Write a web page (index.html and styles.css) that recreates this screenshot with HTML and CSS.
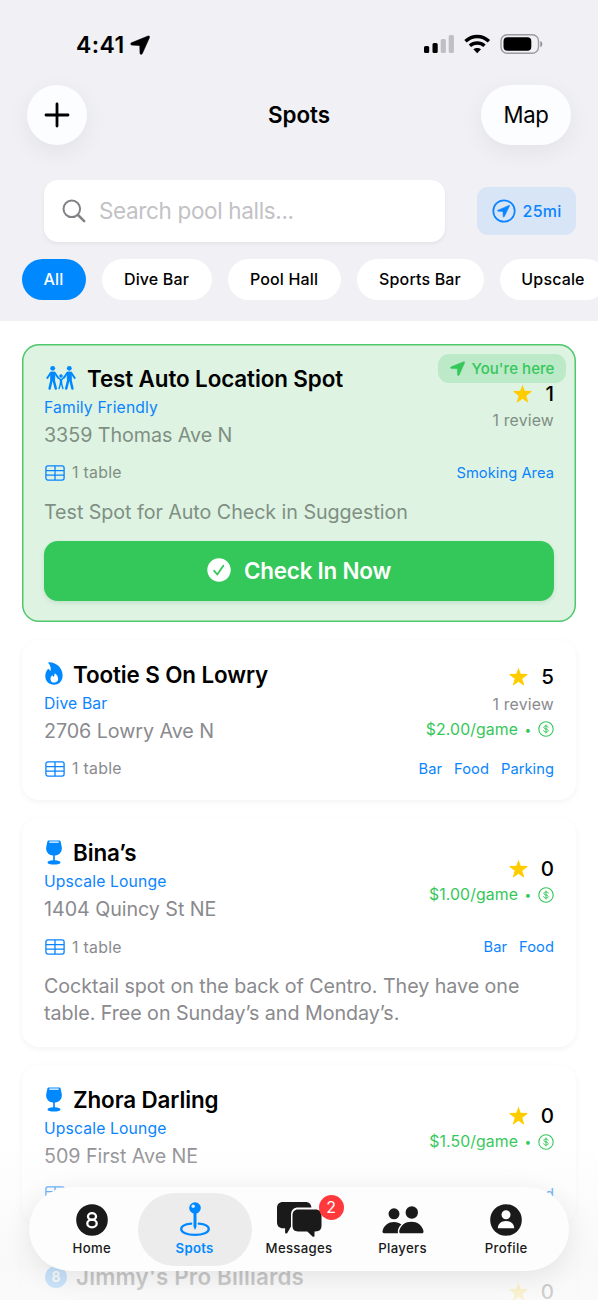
FILE: index.html
```html
<!DOCTYPE html>
<html lang="en">
<head>
<meta charset="utf-8">
<title>Spots</title>
<link rel="stylesheet" href="styles.css">
</head>
<body>
<svg class="defs" aria-hidden="true">
  <symbol id="arrow" viewBox="0 0 20 20"><path d="M18.100 1 1.500 7.800c-1.200.5-.9 2.200.4 2.300l7.300.3c.4 0 .6.200.6.6l.2 7.200c.1 1.400 1.700 1.600 2.300.4L19.500 2.400c.4-.9-.4-1.800-1.400-1.400z" fill="currentColor" stroke="currentColor" stroke-width=".6"/></symbol>
  <symbol id="star" viewBox="0 0 20 20"><path d="M10 .8 12.300 7.200 19 7.400c.5 0 .7.6.3.9L14 12.400l1.900 6.300c.1.500-.4.800-.8.600L10 15.600l-5.100 3.700c-.4.200-.9-.1-.8-.6L6 12.400.7 8.300c-.4-.3-.2-.9.300-.9l6.700-.2z" fill="#ffcc00"/></symbol>
  <symbol id="grid" viewBox="0 0 20 16"><g fill="none" stroke="currentColor" stroke-width="1.300"><rect x=".9" y=".9" width="18.200" height="14.200" rx="2"/><path d="M1 5.600h18M1 10.200h18M10 1v14"/></g></symbol>
  <symbol id="wine" viewBox="0 0 16 24"><path fill="currentColor" fill-rule="evenodd" d="M3 .4h10c.8 0 1.200.4 1.400 1.200l1 4.900c.9 4.600-2.100 8.200-6.600 8.400v4.500c3.200.1 5.400.9 5.400 2.100 0 1.300-2.700 2.100-6.200 2.100s-6.200-.8-6.200-2.100c0-1.200 2.200-2 5.400-2.100v-4.500C2.700 14.700-.3 11.100.6 6.500l1-4.900C1.800.8 2.200.4 3 .4zM4 1.400c-.4 0-.6.200-.7.500-.1.500.2.700.6.700h8.200c.4 0 .7-.2.600-.7-.1-.3-.3-.5-.7-.5z"/></symbol>
  <symbol id="dollar" viewBox="0 0 16 16"><g fill="none" stroke="currentColor" stroke-linecap="round"><circle cx="8" cy="8" r="7.200" stroke-width="1.100"/><path stroke-width="1" d="M10.100 6.200C9.900 5.300 9.100 4.900 8 4.900c-1.200 0-2.100.5-2.100 1.500 0 2.200 4.300.9 4.300 3.200 0 1-.9 1.500-2.200 1.500-1.200 0-2.100-.5-2.300-1.400M8 4v8"/></g></symbol>
</svg>
<div class="screen">
  <header class="top">
    <div class="status">
      <div class="clock"><span class="time">4:41</span><svg class="loc"><use href="#arrow"/></svg></div>
      <svg class="signals" viewBox="0 0 120 20" width="120" height="20">
        <rect x="0" y="12" width="5.200" height="7" rx="1.500"/><rect x="8.500" y="9" width="5.200" height="10" rx="1.500"/>
        <g fill="#bfbfc4"><rect x="16.700" y="5" width="5.200" height="14" rx="1.500"/><rect x="24.700" y="1" width="5.200" height="18" rx="1.500"/></g>
        <g fill="none" stroke="#000" stroke-width="3.500"><path d="M41.500 7.300c6.900-6.300 16.500-6.300 23.400 0"/><path d="M45.900 11.800c4.300-3.800 10.300-3.800 14.600 0"/></g>
        <path d="M53.200 19.200l-3.800-3.900c2.200-1.900 5.400-1.900 7.600 0z"/>
        <rect x="77" y=".7" width="37.500" height="18.600" rx="6.200" fill="none" stroke="#9b9ba0" stroke-width="1.400"/>
        <rect x="79.500" y="3.200" width="27.800" height="13.600" rx="4"/>
        <path d="M116.300 7v6.200c2.600-.9 2.600-5.300 0-6.200z" fill="#8e8e93"/>
      </svg>
    </div>
    <nav class="nav">
      <button class="round" aria-label="Add"><svg width="26" height="26" viewBox="0 0 26 26"><path d="M13 2v22M2 13h22" stroke="#000" stroke-width="2.800" stroke-linecap="round"/></svg></button>
      <h1 class="page-title">Spots</h1>
      <button class="map">Map</button>
    </nav>
    <div class="search-row">
      <div class="search"><svg width="24" height="24" viewBox="0 0 24 24" fill="none" stroke="#818186"><circle cx="9.800" cy="9.800" r="8.300" stroke-width="2"/><path d="m16 16 6.200 6.200" stroke-width="2.500" stroke-linecap="round"/></svg><span class="placeholder">Search pool halls...</span></div>
      <button class="radius"><svg width="24" height="24" viewBox="0 0 24 24"><circle cx="12" cy="12" r="10.700" fill="none" stroke="currentColor" stroke-width="1.700"/><path d="m17 6.400-11 4.800c-.7.300-.5 1 .1 1l4.900.2.200 5c0 .7.800.9 1.100.2l5.200-10.700c.2-.4-.1-.7-.5-.5z" fill="currentColor" stroke="currentColor" stroke-width=".6"/></svg><span>25mi</span></button>
    </div>
    <div class="chips"><span class="chip on">All</span><span class="chip dive">Dive Bar</span><span class="chip hall">Pool Hall</span><span class="chip sports">Sports Bar</span><span class="chip upscale">Upscale</span></div>
  </header>

  <main class="list">
    <article class="card here">
      <span class="badge-here"><svg width="15" height="15"><use href="#arrow"/></svg><span>You're here</span></span>
      <div class="main">
        <div class="info">
          <h2 class="name"><svg class="family" viewBox="0 0 34 26" width="34" height="26"><g fill="currentColor"><circle cx="8.700" cy="3.300" r="2.400"/><circle cx="25.300" cy="3.300" r="2.400"/><circle cx="17" cy="11" r="1.800"/></g><g fill="none" stroke="currentColor" stroke-linecap="round" stroke-linejoin="round"><path stroke-width="5" d="M8.700 9v4.500M25.300 9v4.500"/><path stroke-width="2" d="M7 7.500 3.300 13M10.500 7.500l3.600 5.200M27 7.500l3.700 5.500M23.500 7.500l-3.600 5.200"/><path stroke-width="2.500" d="M7.800 14 5.600 23.500M9.400 14l2.400 9.500M26.200 14l2.200 9.500M24.600 14l-2.400 9.500"/><path stroke-width="1.400" d="m14 12.500 3 2.600 3-2.600M16.500 18.500l-1.400 5M17.500 18.500l1.400 5"/><path stroke-width="2.400" d="M17 15v3.300"/></g></svg><span class="family-name">Test Auto Location Spot</span></h2>
          <div class="kind">Family Friendly</div>
          <div class="addr">3359 Thomas Ave N</div>
        </div>
        <div class="side"><div class="rate"><svg><use href="#star"/></svg><b>1</b></div><div class="review">1 review</div></div>
      </div>
      <div class="meta"><span class="tables"><svg><use href="#grid"/></svg>1 table</span><span class="tags"><span>Smoking Area</span></span></div>
      <p class="desc">Test Spot for Auto Check in Suggestion</p>
      <button class="checkin"><svg width="24" height="24" viewBox="0 0 24 24"><circle cx="12" cy="12" r="11.700" fill="#fff"/><path d="m7.200 12.800 3.100 3.700 6-8.700" fill="none" stroke="#34c759" stroke-width="1.800" stroke-linecap="round" stroke-linejoin="round"/></svg><span>Check In Now</span></button>
    </article>

    <article class="card bar">
      <div class="main">
        <div class="info">
          <h2 class="name"><svg viewBox="0 0 20 24" width="20" height="24"><path fill="currentColor" fill-rule="evenodd" d="M4.500 1.300c-.5-.6-.2-1.100.6-1C13.300.6 18.600 6.200 18.600 13.600c0 5.400-3.300 9.100-8.500 9.100-5.300 0-8.800-3.600-8.800-8.500 0-3.300 1.200-5.600 2.500-7 .5-.5 1.200-.3 1.500.4.300.7.700 1.200 1.200 1.500C7.200 6.400 6.500 3.700 4.500 1.300zM10.200 20.600c2.400 0 3.900-1.400 3.900-3.600 0-2.200-1.200-4.200-3-5.400-.4-.3-.7 0-.6.4.1 1.200-.2 2.100-.8 2.900-.4-.4-.7-.8-.9-1.200-.2-.4-.5-.4-.8-.1-.9.900-1.500 2-1.500 3.300 0 2.300 1.400 3.700 3.700 3.700z"/></svg><span class="tootie">Tootie S On Lowry</span></h2>
          <div class="kind">Dive Bar</div>
          <div class="addr">2706 Lowry Ave N</div>
        </div>
        <div class="side"><div class="rate"><svg><use href="#star"/></svg><b>5</b></div><div class="review">1 review</div><div class="price"><span>$2.00/game</span><i>•</i><svg><use href="#dollar"/></svg></div></div>
      </div>
      <div class="meta"><span class="tables"><svg><use href="#grid"/></svg>1 table</span><span class="tags"><span>Bar</span><span>Food</span><span>Parking</span></span></div>
    </article>

    <article class="card">
      <div class="main">
        <div class="info">
          <h2 class="name"><svg class="glass"><use href="#wine"/></svg><span>Bina’s</span></h2>
          <div class="kind">Upscale Lounge</div>
          <div class="addr">1404 Quincy St NE</div>
        </div>
        <div class="side"><div class="rate"><svg><use href="#star"/></svg><b>0</b></div><div class="price"><span>$1.00/game</span><i>•</i><svg><use href="#dollar"/></svg></div></div>
      </div>
      <div class="meta"><span class="tables"><svg><use href="#grid"/></svg>1 table</span><span class="tags"><span>Bar</span><span>Food</span></span></div>
      <p class="desc">Cocktail spot on the back of Centro. They have one<br>table. Free on Sunday’s and Monday’s.</p>
    </article>

    <article class="card">
      <div class="main">
        <div class="info">
          <h2 class="name"><svg class="glass"><use href="#wine"/></svg><span>Zhora Darling</span></h2>
          <div class="kind">Upscale Lounge</div>
          <div class="addr">509 First Ave NE</div>
        </div>
        <div class="side"><div class="rate"><svg><use href="#star"/></svg><b>0</b></div><div class="price"><span>$1.50/game</span><i>•</i><svg><use href="#dollar"/></svg></div></div>
      </div>
      <div class="meta"><span class="tables"><svg><use href="#grid"/></svg>1 table</span><span class="tags"><span>Bar</span><span>Food</span></span></div>
    </article>

    <article class="card last">
      <div class="main">
        <div class="info">
          <h2 class="name"><span class="eight">8</span><span class="jimmy">Jimmy's Pro Billiards</span></h2>
        </div>
        <div class="side"><div class="rate"><svg><use href="#star"/></svg><b>0</b></div></div>
      </div>
    </article>
  </main>

  <div class="fade"></div>
  <nav class="tabbar">
    <a class="tab"><svg viewBox="0 0 40 40" width="40" height="40"><circle cx="20" cy="20" r="15.800" fill="#1a1a1a"/><g fill="none" stroke="#fff" stroke-width="2.300"><ellipse cx="20" cy="16.500" rx="4" ry="3.300"/><ellipse cx="20" cy="23.500" rx="4.700" ry="3.800"/></g></svg><span>Home</span></a>
    <a class="tab active"><svg viewBox="0 0 40 40" width="40" height="40"><path d="M16.200 23.700c-6 .6-10 2.700-10 5.400 0 3.400 5.800 5.800 13.800 5.800s13.800-2.400 13.800-5.800c0-2.700-4-4.800-10-5.400" fill="none" stroke="currentColor" stroke-width="2.300" stroke-linecap="round"/><path d="M18.500 13h3v13.500L20 30l-1.500-3.500z" fill="currentColor"/><circle cx="20" cy="8" r="5.800" fill="currentColor"/><circle cx="18.200" cy="6.200" r="1.700" fill="#dceeff"/></svg><span>Spots</span></a>
    <a class="tab"><svg class="msg" viewBox="0 0 48 40" width="48" height="40"><path fill="#1a1a1a" d="M8 2h22.500c3.500 0 5.700 2.100 5.900 5.500H23.500c-5 0-7.500 2.600-7.500 7.500v11.600L12.300 33c-.8.900-2.200.6-2.200-.7v-4H8c-3.800 0-6-2.200-6-6V8c0-3.800 2.200-6 6-6zM23 9.500h17.500c3.800 0 6 2.200 6 6v10.300c0 3.800-2.200 5.700-6 5.700h-1v4.200c0 1.200-1.200 1.500-2 .7l-5.200-4.900H23c-3.500 0-5.500-1.900-5.500-5.700V15.500c0-3.800 2-6 5.500-6z"/></svg><span>Messages</span><em class="count">2</em></a>
    <a class="tab"><svg viewBox="0 0 44 40" width="44" height="40" fill="#1a1a1a"><circle cx="13" cy="13.800" r="5.500"/><circle cx="30.800" cy="12.500" r="6.200"/><path d="M17 33.300H3.300c-1.800 0-2.200-1.300-1.500-3.200 1.500-4.500 5.700-8 11.200-8 3.100 0 5.500.9 7.400 2.500-2.600 2.300-4.200 5.400-3.400 8.700zM20.300 33.300c-2 0-2.600-1.400-1.800-3.400C20 25.300 24.300 21.800 30.400 21.800s10.200 3.500 11.800 8.100c.8 2 .2 3.400-1.800 3.400z"/></svg><span>Players</span></a>
    <a class="tab"><svg viewBox="0 0 40 40" width="40" height="40"><circle cx="20" cy="20" r="15.800" fill="#1a1a1a"/><circle cx="20" cy="14.800" r="4.500" fill="#fff"/><path d="M11.800 28.200c0-4.400 3.600-7.200 8.200-7.200s8.200 2.800 8.200 7.200z" fill="#fff"/></svg><span>Profile</span></a>
  </nav>
</div>
</body>
</html>
```
FILE: styles.css
```css
* { box-sizing: border-box; }
html, body { margin: 0; height: 1300px; overflow: hidden; background: #fff; }
body { font-family: Inter, "Liberation Sans", sans-serif; color: #000; }
button { font: inherit; border: 0; padding: 0; color: inherit; }
h1, h2, p { margin: 0; }
.defs { position: absolute; width: 0; height: 0; }
.screen { position: relative; width: 598px; height: 1300px; overflow: hidden; white-space: nowrap; }

.top { height: 320.500px; background: #f0f0f5; }
.status { height: 84.500px; padding: 34px 54px 0 76px; display: flex; justify-content: space-between; align-items: flex-start; }
.clock { display: flex; align-items: center; gap: 5px; height: 21px; }
.time { font-size: 23px; font-weight: 600; letter-spacing: .4px; }
.loc { width: 20px; height: 20px; }
.nav { display: grid; grid-template-columns: 90px 1fr 90px; align-items: center; height: 60px; padding: 0 27px; }
.round, .map { height: 60px; background: #fcfdfe; border-radius: 30px; box-shadow: 0 7px 24px rgba(0,0,0,.06); }
.round { width: 60px; display: grid; place-items: center; }
.map { width: 90px; font-size: 22.200px; letter-spacing: -0.3px; padding-bottom: 1px; }
.page-title { text-align: center; font-size: 22.400px; font-weight: 600; letter-spacing: 0; padding-bottom: 1px; }
.search-row { display: flex; align-items: center; justify-content: space-between; padding: 35px 22px 0 44px; height: 97px; }
.search { width: 401px; height: 62px; border-radius: 14px; background: #fff; box-shadow: 0 2px 4px rgba(0,0,0,.06); display: flex; align-items: center; padding-left: 18px; gap: 13px; font-size: 22.500px; color: #c2c2c5; letter-spacing: -0.35px; }
.radius { width: 99px; height: 48px; border-radius: 11px; background: #d8e5f7; color: #0a84ff; display: flex; align-items: center; justify-content: center; gap: 7px; font-size: 16px; font-weight: 500; letter-spacing: .2px; }
.chips { display: flex; gap: 16px; padding: 17px 0 0 22px; }
.chip { flex: none; height: 41px; border-radius: 21px; background: #fff; font-size: 16px; font-weight: 500; display: grid; place-items: center; letter-spacing: .15px; padding: 0 1px 1px 0; }
.on { width: 64px; background: #0088ff; color: #fff; }
.dive { width: 110px; }
.hall { width: 113px; }
.sports { width: 127px; }
.upscale { width: 107px; }

.list { padding: 23px 22px 0; display: flex; flex-direction: column; gap: 18px; }
.card { position: relative; flex: none; border-radius: 17px; padding: 21px 22px 20px; background: #fff; box-shadow: 0 2px 6px rgba(0,0,0,.05); }
.bar { padding-bottom: 21.500px; }
.here { background: #def3e2; box-shadow: inset 0 0 0 1.500px #4fc76c; padding-bottom: 21px; }
.badge-here { position: absolute; right: 10.500px; top: 10px; width: 128px; height: 29px; border-radius: 11px; background: #bce9c8; color: #34c759; display: flex; align-items: center; gap: 7px; padding-left: 12px; font-size: 15px; font-weight: 500; letter-spacing: .05px; }
.main { display: flex; justify-content: space-between; align-items: center; height: 83px; }
.name { display: flex; align-items: center; height: 27px; gap: 9px; font-size: 22.400px; font-weight: 600; letter-spacing: -0.1px; color: #000; }
.name svg { color: #0088ff; flex: none; }
.glass { width: 20px; height: 25px; }
.kind { height: 30px; line-height: 32px; font-size: 15.700px; color: #0a84ff; letter-spacing: .15px; }
.addr { height: 26px; line-height: 27px; font-size: 19.700px; letter-spacing: -0.05px; color: #8a8a8e; }
.here .addr, .here .review, .here .desc, .here .tables { color: #7f8f83; }
.side { display: flex; flex-direction: column; align-items: flex-end; }
.rate { display: flex; align-items: center; height: 28px; gap: 13px; font-size: 20.500px; }
.rate svg { width: 19px; height: 19px; }
.rate b { font-weight: 500; }
.review { height: 26px; line-height: 27px; font-size: 15.800px; letter-spacing: .2px; color: #8a8a8e; }
.price { display: flex; align-items: center; height: 25px; font-size: 15.800px; letter-spacing: .1px; color: #34c759; }
.price i { font-style: normal; font-size: 12px; width: 20px; text-align: center; }
.price svg { width: 16px; height: 16px; }
.meta { display: flex; align-items: center; justify-content: space-between; height: 20px; margin-top: 15px; font-size: 15.500px; }
.tables { display: flex; align-items: center; color: #8a8a8e; gap: 7px; font-size: 15.800px; letter-spacing: .3px; }
.tables svg { width: 20px; height: 16px; margin-left: 1px; color: #0a84ff; }
.tags { display: flex; gap: 12px; color: #0a84ff; font-size: 14.700px; letter-spacing: .05px; }
.desc { margin-top: 16px; font-size: 19.700px; line-height: 27px; letter-spacing: -0.05px; color: #8a8a8e; }
.checkin { margin-top: 15px; width: 100%; height: 60px; border-radius: 14px; background: #34c759; color: #fff; font-size: 22.400px; font-weight: 600; letter-spacing: -0.2px; display: flex; align-items: center; justify-content: center; gap: 13px; box-shadow: 0 2px 4px rgba(40,130,70,.15); padding-bottom: 1px; }
.last { height: 160px; }
.last .main { align-items: flex-start; }
.last .side { padding-top: 14px; }
.jimmy { letter-spacing: .15px; }
.eight { width: 22px; height: 22px; margin-left: 1px; border-radius: 50%; background: #0088ff; color: #fff; font-size: 14px; display: grid; place-items: center; letter-spacing: 0; }

.fade { position: absolute; inset: 1140px 0 0; background: linear-gradient(rgba(250,250,250,0), rgba(249,249,249,.4) 48px, rgba(247,247,247,.78) 125px, rgba(249,249,249,.84)); }
.tabbar { position: absolute; left: 29px; top: 1187px; width: 540px; height: 84px; border-radius: 42px; background: #fdfdfd; box-shadow: 0 6px 28px rgba(0,0,0,.09); display: grid; grid-template-columns: repeat(5, 103.600px); justify-content: center; align-items: center; }
.tab { position: relative; height: 73px; display: flex; flex-direction: column; align-items: center; padding-top: 7px; color: #1a1a1a; font-size: 13.200px; font-weight: 500; letter-spacing: .3px; line-height: 17px; }
.active { width: 114px; margin-left: -6px; background: #ececec; border-radius: 37px; color: #0088ff; font-weight: 600; }
.count { position: absolute; right: 7px; top: 2px; width: 25px; height: 25px; border-radius: 50%; background: #ff383c; color: #fff; font-style: normal; font-weight: 400; font-size: 16px; display: grid; place-items: center; }
```
